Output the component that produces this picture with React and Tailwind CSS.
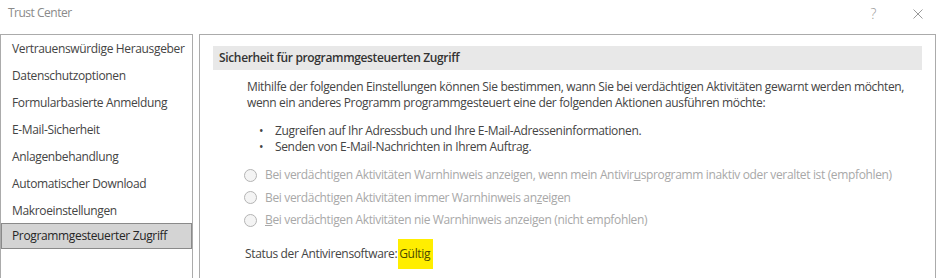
import React from "react";

const font = { fontFamily: '"Open Sans", "Noto Sans", sans-serif' };

const items = [
  "Vertrauenswürdige Herausgeber",
  "Datenschutzoptionen",
  "Formularbasierte Anmeldung",
  "E-Mail-Sicherheit",
  "Anlagenbehandlung",
  "Automatischer Download",
  "Makroeinstellungen",
  "Programmgesteuerter Zugriff",
];

function Radio({ children }) {
  return (
    <div className="flex items-center h-[22.5px]">
      <span className="w-[13px] h-[13px] rounded-full border border-[#b4b4b4] bg-[#f4f4f4] mr-[8px] shrink-0" />
      <span className="text-[#a8a8a8] whitespace-nowrap">{children}</span>
    </div>
  );
}

export default function App() {
  return (
    <div className="w-[938px] h-[278px] overflow-hidden bg-white text-[12px] tracking-[-0.35px] text-[#444444]" style={font}>
      <div className="h-[34px] flex items-start justify-between">
        <div className="pl-[8px] pt-[4px] text-[#8a8a8a] text-[12px] tracking-[-0.5px]">Trust Center</div>
        <div className="flex items-start pt-[3px] pr-[15px] text-[#9a9a9a]">
          <span className="text-[14px] font-light mr-[37px]">?</span>
          <svg width="10" height="10" viewBox="0 0 10 10" className="mt-[6px]">
            <path d="M0.5 0.5 L9.5 9.5 M9.5 0.5 L0.5 9.5" stroke="#9a9a9a" strokeWidth="1" />
          </svg>
        </div>
      </div>
      <div className="flex">
        <div className="w-[193px] h-[260px] border border-[#ababab]">
          {items.map((t, i) => (
            <div
              key={t}
              className={
                i === 7
                  ? "h-[26px] mt-[-1px] flex items-center pl-[10px] bg-[#d4d4d4] border border-[#8a8a8a] text-[#262626] whitespace-nowrap"
                  : "h-[27px] flex items-center pl-[11px] text-[#444444] whitespace-nowrap"
              }
            >
              {t}
            </div>
          ))}
        </div>
        <div className="ml-[6px] w-[737px] h-[260px] border border-[#ababab] px-[13px] pt-[11px]">
          <div className="h-[24px] bg-[#e8e8e8] flex items-center pl-[6px] font-semibold text-[#333333]">
            Sicherheit für programmgesteuerten Zugriff
          </div>
          <div className="pl-[34px] pt-[9px] leading-[16px]">
            <p className="whitespace-nowrap">
              Mithilfe der folgenden Einstellungen können Sie bestimmen, wann Sie bei verdächtigen Aktivitäten gewarnt werden möchten,
              <br />
              wenn ein anderes Programm programmgesteuert eine der folgenden Aktionen ausführen möchte:
            </p>
            <ul className="mt-[12px] pl-[12px]">
              <li className="flex">
                <span className="w-[16px]">•</span>Zugreifen auf Ihr Adressbuch und Ihre E-Mail-Adresseninformationen.
              </li>
              <li className="flex">
                <span className="w-[16px]">•</span>Senden von E-Mail-Nachrichten in Ihrem Auftrag.
              </li>
            </ul>
            <div className="mt-[9px] -ml-[3px]">
              <Radio>
                Bei verdächtigen Aktivitäten Warnhinweis anzeigen, wenn mein Antivir<u>u</u>sprogramm inaktiv oder veraltet ist (empfohlen)
              </Radio>
              <Radio>
                Bei verdächtigen Aktivitäten immer Warnhinweis an<u>z</u>eigen
              </Radio>
              <Radio>
                <u>B</u>ei verdächtigen Aktivitäten nie Warnhinweis anzeigen (nicht empfohlen)
              </Radio>
            </div>
            <div className="mt-[7px] flex items-center -ml-[2px]">
              <span>Status der Antivirensoftware:</span>
              <span className="ml-[1px] bg-[#ffee00] pl-[1px] pr-[3px] py-[7px] text-[#4a4a00]">Gültig</span>
            </div>
          </div>
        </div>
      </div>
    </div>
  );
}
